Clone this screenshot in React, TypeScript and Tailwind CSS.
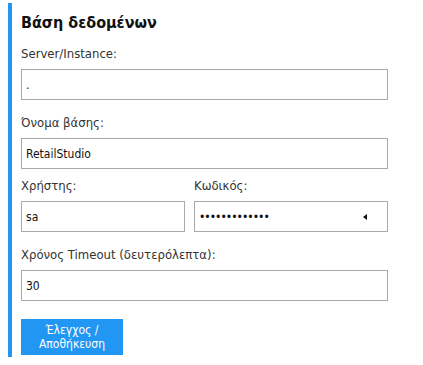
import React from 'react'

const font = { fontFamily: '"DejaVu Sans Condensed", "DejaVu Sans", Verdana, sans-serif' }

function Field({ value, className = '' }: { value: string; className?: string }) {
  return (
    <div
      className={`flex h-[31px] items-center border border-[#a9a9a9] bg-white pl-[4px] text-[12px] text-[#111] ${className}`}
    >
      {value}
    </div>
  )
}

export default function App() {
  return (
    <div className="h-[365px] w-[423px] bg-white pt-[3px] pl-[8px]" style={font}>
      <div className="w-[380px] border-l-4 border-[#2196f3] pl-[9px] pb-[2px]">
        <h2 className="pt-[10px] text-[16px] leading-[20px] font-bold text-[#111]">Βάση δεδομένων</h2>

        <div className="mt-[13px] text-[13px] leading-[16px] text-[#333]">Server/Instance:</div>
        <Field value="." className="mt-[7px]" />

        <div className="mt-[15px] text-[13px] leading-[16px] text-[#333]">Όνομα βάσης:</div>
        <Field value="RetailStudio" className="mt-[7px]" />

        <div className="mt-[9px] flex gap-[9px]">
          <div className="w-[164px]">
            <div className="text-[13px] leading-[16px] text-[#333]">Χρήστης:</div>
            <Field value="sa" className="mt-[7px]" />
          </div>
          <div className="flex-1">
            <div className="text-[13px] leading-[16px] text-[#333]">Κωδικός:</div>
            <div className="mt-[7px] flex h-[31px] items-center justify-between border border-[#a9a9a9] bg-white pr-[20px] pl-[4px]">
              <span className="text-[12px] tracking-[-1px] text-[#111]">•••••••••••••</span>
              <span className="h-0 w-0 border-y-[3px] border-r-[4px] border-y-transparent border-r-[#111]" />
            </div>
          </div>
        </div>

        <div className="mt-[15px] text-[13px] leading-[16px] text-[#333]">Χρόνος Timeout (δευτερόλεπτα):</div>
        <Field value="30" className="mt-[7px]" />

        <button className="mt-[18px] flex h-[36px] w-[102px] flex-col items-center justify-center bg-[#2196f3] text-[12px] leading-[14px] text-white">
          <span>Έλεγχος /</span>
          <span>Αποθήκευση</span>
        </button>
      </div>
    </div>
  )
}
